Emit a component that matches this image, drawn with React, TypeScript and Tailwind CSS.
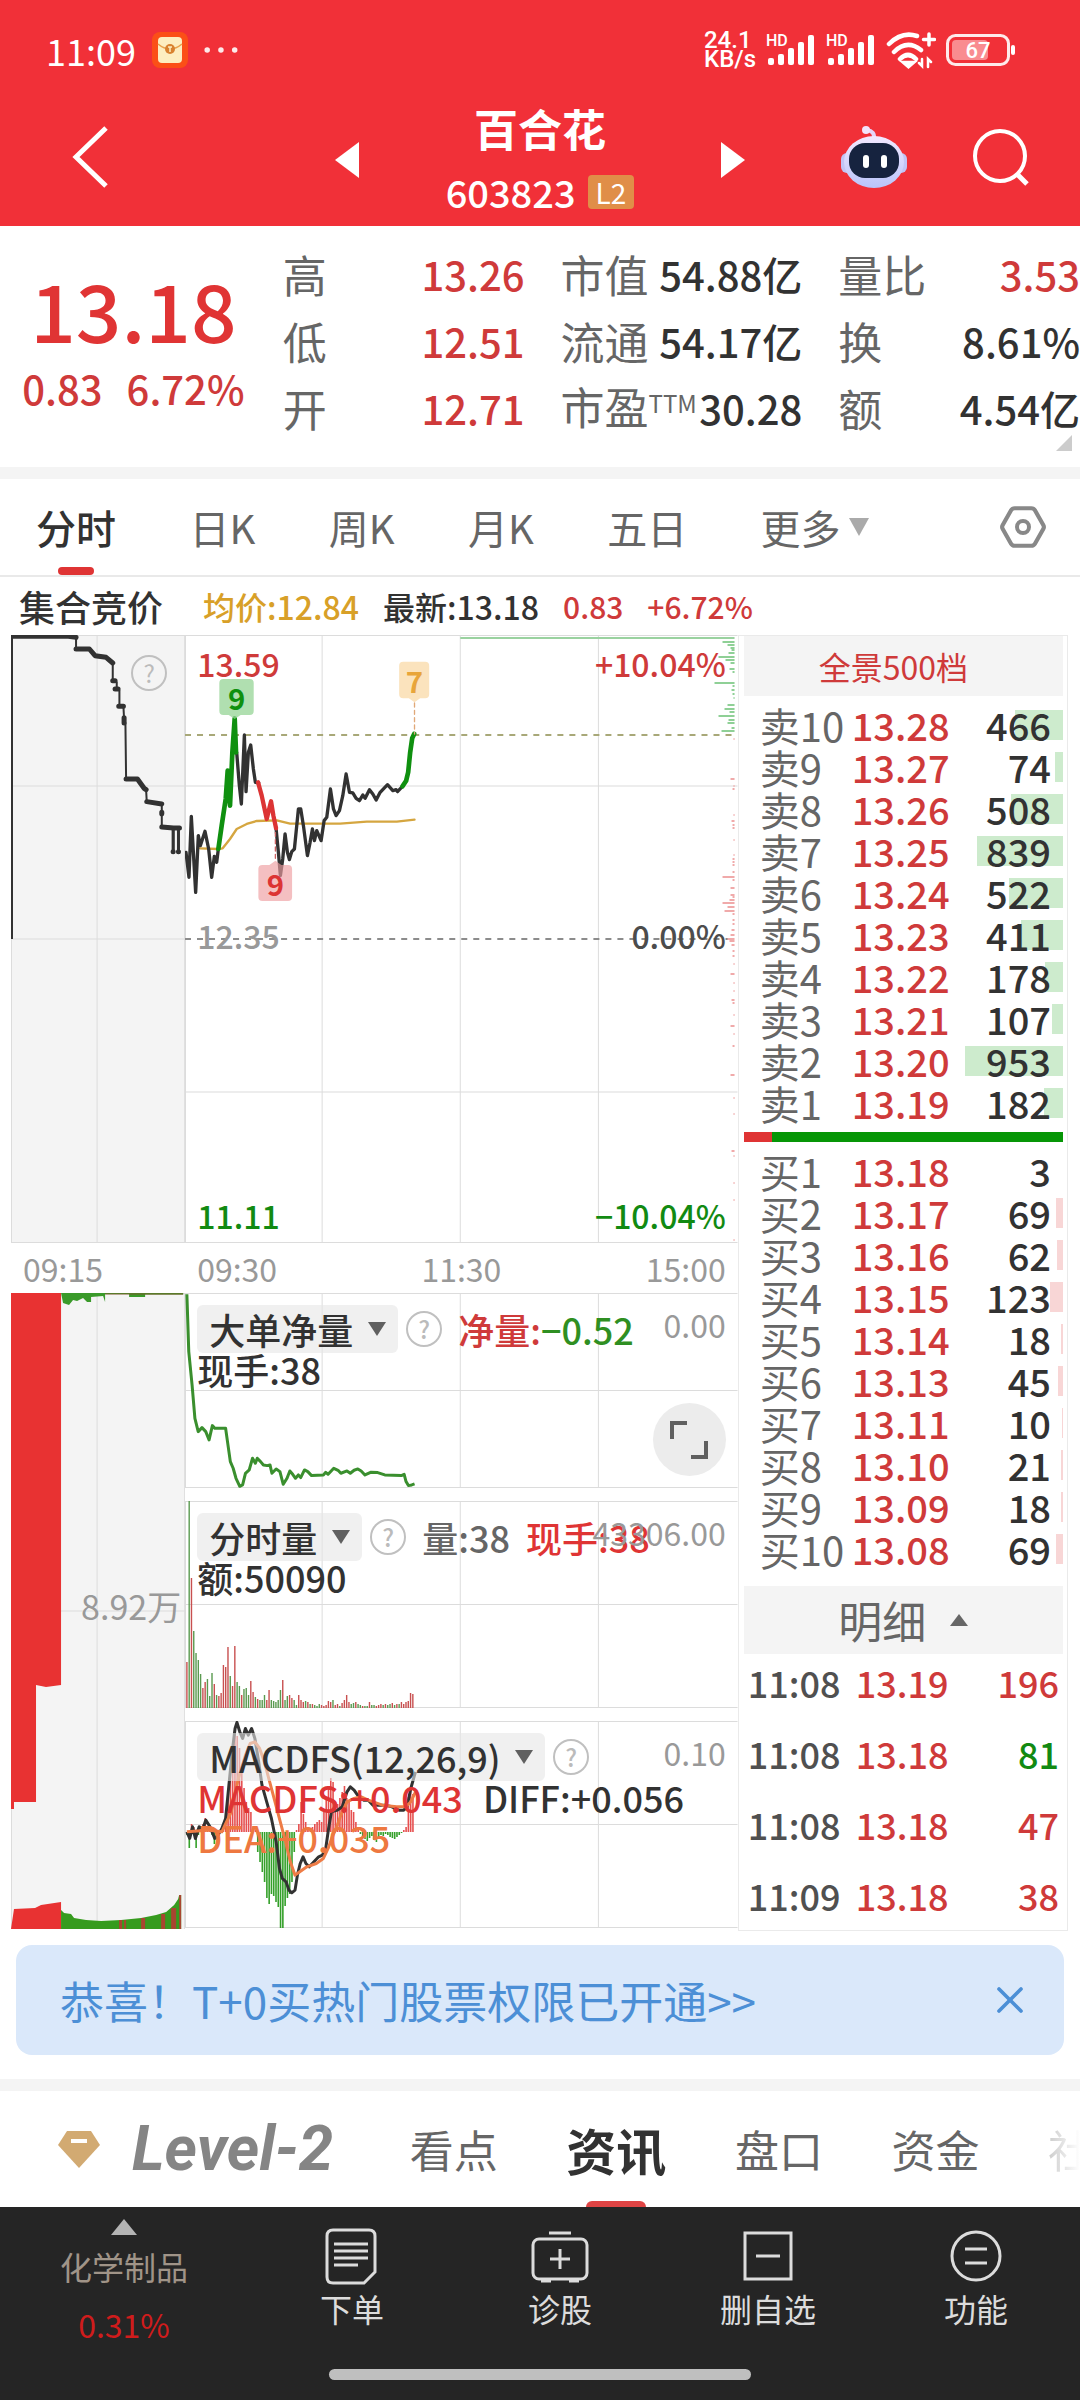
import type { ReactNode } from 'react';
import { Hexagon, X } from 'lucide-react';

const quotes = [
  [
    { label: '高', value: '13.26', up: true },
    { label: '低', value: '12.51', up: true },
    { label: '开', value: '12.71', up: true },
  ],
  [
    { label: '市值', value: '54.88亿' },
    { label: '流通', value: '54.17亿' },
    { label: '市盈', sup: 'TTM', value: '30.28' },
  ],
  [
    { label: '量比', value: '3.53', up: true },
    { label: '换', value: '8.61%' },
    { label: '额', value: '4.54亿' },
  ],
];

const sells: [string, string, number][] = [
  ['卖10', '13.28', 466],
  ['卖9', '13.27', 74],
  ['卖8', '13.26', 508],
  ['卖7', '13.25', 839],
  ['卖6', '13.24', 522],
  ['卖5', '13.23', 411],
  ['卖4', '13.22', 178],
  ['卖3', '13.21', 107],
  ['卖2', '13.20', 953],
  ['卖1', '13.19', 182],
];

const buys: [string, string, number][] = [
  ['买1', '13.18', 3],
  ['买2', '13.17', 69],
  ['买3', '13.16', 62],
  ['买4', '13.15', 123],
  ['买5', '13.14', 18],
  ['买6', '13.13', 45],
  ['买7', '13.11', 10],
  ['买8', '13.10', 21],
  ['买9', '13.09', 18],
  ['买10', '13.08', 69],
];

const trades = [
  { time: '11:08', price: '13.19', vol: 196, up: true },
  { time: '11:08', price: '13.18', vol: 81, up: false },
  { time: '11:08', price: '13.18', vol: 47, up: true },
  { time: '11:09', price: '13.18', vol: 38, up: true },
];

// [y, length] of the price distribution bars
const profileAbove = [
  [7, 12], [10, 7], [13, 4], [15, 3], [18, 6], [22, 16], [25, 9], [28, 4], [34, 5], [37, 2], [48, 20], [51, 2],
  [55, 3], [59, 2], [63, 1], [70, 7], [74, 10], [77, 5], [81, 16], [85, 6], [88, 7], [93, 3], [96, 13],
];
const profileBelow = [
  [104, 1], [144, 4], [151, 1], [154, 2], [180, 1], [186, 3], [190, 2], [193, 2], [205, 1], [220, 1], [224, 2],
  [227, 2], [230, 2], [237, 2], [242, 12], [245, 2], [253, 4], [260, 4], [262, 2], [265, 5], [268, 12], [272, 7],
  [276, 10], [279, 2], [285, 2], [289, 2], [295, 3], [300, 4], [304, 7], [306, 5], [310, 3], [316, 2], [321, 2],
  [329, 1], [339, 4], [348, 1], [356, 1], [365, 3], [368, 2], [380, 1], [391, 4], [399, 1], [411, 2], [440, 4],
  [463, 1], [479, 1], [516, 3], [521, 1], [548, 1], [565, 1], [605, 1],
];

// height + colour per minute
const volumes =
  '46r 207g 130r 77g 55g 48g 34g 20r 26r 29g 12g 35g 24r 13g 12r 15r 43r 41r 61r 32g 22r 62r 26g 22g 13r 19g 20g 13g 27r 16r 11g 9r 8g 8g 13g 8r 18r 8g 7g 6g 8g 18g 28r 8g 12g 13r 10r 8g 3g 13r 8r 6r 7g 6r 4g 4r 3g 2g 4g 3r 2r 3r 7r 6r 8g 3r 4r 2g 5r 8r 13r 6r 4g 5g 6r 4g 3g 2r 2g 2g 6r 3g 3g 2r 3r 4r 3g 4r 3g 4g 5r 3g 4r 4g 6r 4r 6r 7r 15r 14r'.split(' ');

const macd = [
  -3, -16, 8, 5, -16, -3, 3, 8, 14, 4, 3, -3, -12, -6, -4, 3, 8, 22, 34, 52, 74, 99, 96, 84, 62, 44, 30, 24, 20, 6, 2,
  -20, -30, -40, -50, -66, -72, -62, -64, -70, -75, -96, -96, -74, -66, -62, -50, -20, 2, 8, 30, 18, 10, 3, 3, 5, 8,
  10, 12, 10, 20, 35, 45, 54, 50, 30, 28, 34, 40, 46, 34, 30, 22, 20, 10, 4, -2, -5, -7, -9, -6, -4, -8, -10, -6, -3,
  -4, -2, -3, -5, -6, -7, -5, -3, -1, 2, 5, 35, 43, 38,
];

const tabs = ['分时', '日K', '周K', '月K', '五日'];

function Grid({ height, rows }: { height: number; rows: number[] }) {
  return (
    <g stroke="#dcdcdc">
      {[137, 275, 413].map((x) => (
        <line key={x} x1={x} x2={x} y1="0" y2={height} />
      ))}
      {rows.map((y) => (
        <line key={y} x1="0" x2="552" y1={y} y2={y} />
      ))}
      <line x1="0.5" x2="0.5" y1="0" y2={height} />
    </g>
  );
}

function HelpButton() {
  return (
    <button
      type="button"
      aria-label="说明"
      className="flex size-9 shrink-0 items-center justify-center rounded-full border-2 border-[#c0c0c0] text-2xl leading-none text-[#bbb]"
    >
      ?
    </button>
  );
}

function Indicator({ name }: { name: string }) {
  return (
    <label className="relative flex items-center">
      <select
        aria-label="指标"
        className="h-12 appearance-none rounded-md bg-[#e6e6e6]/60 pr-11 pl-3 text-4xl leading-[48px] font-medium text-[#323232]"
      >
        <option>{name}</option>
      </select>
      <svg viewBox="0 0 18 14" className="pointer-events-none absolute right-3 h-3.5 w-[18px]">
        <path d="M0 0h18l-9 14z" fill="#606060" />
      </svg>
    </label>
  );
}

function SubChart({ height, label, mid, children, top, second }: {
  height: string;
  label: string;
  mid: string;
  children: ReactNode;
  top: ReactNode;
  second: ReactNode;
}) {
  return (
    <section aria-label={label} className={`relative ${height}`}>
      {children}
      <div className="absolute inset-0 pt-3 pl-3 font-medium">
        <div className="flex h-12 items-center gap-2 text-4xl whitespace-nowrap">{top}</div>
        <div className="-mt-1 flex flex-wrap gap-x-5 text-4xl leading-10">{second}</div>
      </div>
      <span className="absolute top-2 right-3 text-[32px] leading-[46px] text-[#999]">{mid}</span>
    </section>
  );
}

function StatusBar() {
  return (
    <div className="flex h-24 items-center pt-1 pr-16 pl-[46px] text-white">
      <span className="text-[36px] leading-10">11:09</span>
      <svg viewBox="0 0 36 36" className="ml-4 size-9">
        <rect width="36" height="36" rx="8" fill="#fb4f17" />
        <rect x="6" y="5" width="24" height="26" rx="4" fill="#fdeec0" />
        <path d="M6 12q12 10 24 0" fill="none" stroke="#e8a04a" strokeWidth="1.5" />
        <circle cx="18" cy="17" r="5" fill="#d9822f" />
        <path d="M16 15h4M18 15v5" stroke="#fdeec0" strokeWidth="1.5" />
      </svg>
      <svg viewBox="0 0 34 6" className="ml-4 h-2 w-9" fill="#fff" opacity=".9">
        <circle cx="3" cy="3" r="2.6" />
        <circle cx="16" cy="3" r="2.6" />
        <circle cx="29" cy="3" r="2.6" />
      </svg>
      <div className="ml-auto flex items-center gap-[10px]">
        <span className="font-[Roboto] text-[24px] leading-[19px] font-medium">
          24.1
          <br />
          KB/s
        </span>
        {[0, 1].map((i) => (
          <svg key={i} viewBox="0 0 50 34" className="h-[34px] w-[50px]" fill="#fff">
            <text x="0" y="13" fontSize="16" fontWeight="500" fontFamily="Roboto, sans-serif">
              HD
            </text>
            <rect x="2" y="25" width="6" height="7" rx="2" />
            <rect x="12" y="21" width="6" height="11" rx="2" />
            <rect x="22" y="15" width="6" height="17" rx="2" />
            <rect x="32" y="9" width="6" height="23" rx="2" />
            <rect x="42" y="2" width="6" height="30" rx="2" />
          </svg>
        ))}
        <svg viewBox="0 0 50 38" className="h-[38px] w-[50px]" fill="none" stroke="#fff" strokeWidth="4.5" strokeLinecap="round">
          <path d="M3 13Q16 0 31 5M8 21q13-13 27 -2M14 28q8-8 16 0" />
          <path d="M19 32l3.500 3 3.500-3z" fill="#fff" />
          <path d="M43 3v11M37.500 8.500h11" strokeWidth="3.500" />
          <path d="M36 28v7l-3-3M42 36v-8l3 3" strokeWidth="2.500" />
        </svg>
        <svg viewBox="0 0 70 32" className="h-8 w-[70px]">
          <rect x="1.500" y="1.500" width="61" height="29" rx="8" fill="none" stroke="#fff" strokeWidth="3" opacity=".9" />
          <rect x="6" y="6" width="36" height="20" rx="4" fill="#f98c90" />
          <rect x="65" y="11" width="4" height="10" rx="2" fill="#fff" />
          <text x="32" y="24" textAnchor="middle" fill="#fff" fontSize="22" fontWeight="500" fontFamily="Roboto, sans-serif">
            67
          </text>
        </svg>
      </div>
    </div>
  );
}

function Robot() {
  return (
    <svg viewBox="0 0 68 64" className="h-16 w-[68px]">
      <defs>
        <linearGradient id="shell" x1="0" y1="0" x2="0" y2="1">
          <stop offset="0%" stopColor="#f3e8ff" />
          <stop offset="100%" stopColor="#b9c4fa" />
        </linearGradient>
      </defs>
      <path d="M34 14q1-8-7-9" fill="none" stroke="#e6d3f7" strokeWidth="4" />
      <circle cx="26" cy="5" r="4" fill="#f3e3fb" />
      <rect x="1" y="28" width="12" height="20" rx="6" fill="#c2c4f6" />
      <rect x="55" y="28" width="12" height="20" rx="6" fill="#c2c4f6" />
      <ellipse cx="34" cy="37" rx="30" ry="26" fill="url(#shell)" />
      <rect x="9" y="18" width="50" height="35" rx="16" fill="#16233f" />
      <rect x="23" y="30" width="6" height="13" rx="3" fill="#fff" />
      <rect x="41" y="30" width="6" height="13" rx="3" fill="#fff" />
    </svg>
  );
}

function Header() {
  return (
    <header className="bg-[#f13038]">
      <StatusBar />
      <div className="relative flex h-[130px] items-center justify-between pr-[50px] pb-2 pl-[72px]">
        <button type="button" aria-label="返回">
          <svg viewBox="0 0 38 62" className="h-[62px] w-[38px]" fill="none" stroke="#fff" strokeWidth="5">
            <path d="M34 2L4 31l30 29" />
          </svg>
        </button>
        <div className="absolute inset-x-0 top-0 mx-auto flex w-[410px] items-center justify-between">
          <button type="button" aria-label="上一只">
            <svg viewBox="0 0 24 36" className="h-9 w-6">
              <path d="M24 0v36L0 18z" fill="#fff" />
            </svg>
          </button>
          <div className="flex flex-col items-center text-white">
            <h1 className="text-[44px] leading-[64px] font-bold">百合花</h1>
            <p className="flex items-center gap-3">
              <span className="text-[38px] leading-[64px] font-medium">603823</span>
              <span className="rounded-sm bg-[#e08e48] px-2 text-[28px] leading-[34px]">L2</span>
            </p>
          </div>
          <button type="button" aria-label="下一只">
            <svg viewBox="0 0 24 36" className="h-9 w-6">
              <path d="M0 0v36l24-18z" fill="#fff" />
            </svg>
          </button>
        </div>
        <div className="flex items-center gap-16">
          <button type="button" aria-label="助手">
            <Robot />
          </button>
          <button type="button" aria-label="搜索">
            <svg viewBox="0 0 58 58" className="size-[58px]" fill="none" stroke="#fff" strokeWidth="4">
              <circle cx="28" cy="28" r="25" />
              <path d="M45 46l10 10" strokeWidth="5" />
            </svg>
          </button>
        </div>
      </div>
    </header>
  );
}

function Quote() {
  return (
    <section className="relative grid h-[253px] grid-cols-[245fr_240fr_240fr_240fr] gap-x-9 border-b-12 border-[#f4f4f4] pt-3.5">
      <div className="flex flex-col items-center pl-5 text-[#cf3a3a]">
        <strong className="pt-4 text-[80px] leading-[104px] font-medium text-[#e03434]">13.18</strong>
        <p className="flex gap-6 text-[40px] leading-14 font-medium">
          <span>0.83</span>
          <span>6.72%</span>
        </p>
      </div>
      {quotes.map((col, i) => (
        <dl key={i}>
          {col.map((q) => (
            <div key={q.label} className="flex h-[67px] items-center justify-between whitespace-nowrap">
              <dt className="text-[44px] leading-none text-[#666]">
                {q.label}
                {q.sup && <sup className="text-2xl">{q.sup}</sup>}
              </dt>
              <dd className={`text-[40px] leading-none font-medium ${q.up ? 'text-[#cf3a3a]' : 'text-[#323232]'}`}>
                {q.value}
              </dd>
            </div>
          ))}
        </dl>
      ))}
      <svg viewBox="0 0 16 16" className="absolute right-2 bottom-4 size-4">
        <path d="M16 0v16H0z" fill="#ccc" />
      </svg>
    </section>
  );
}

function PeriodTabs() {
  return (
    <nav className="flex h-[98px] items-center justify-between border-b-2 border-[#e9e9e9] pr-8 pl-9 text-[40px] text-[#666]">
      {tabs.map((t, i) => (
        <button
          key={t}
          type="button"
          className={`relative h-full ${i === 0 ? 'font-medium text-[#323232]' : ''}`}
        >
          {t}
          {i === 0 && <span className="absolute bottom-0 left-1/2 h-2 w-9 -translate-x-1/2 rounded-full bg-[#df3434]" />}
        </button>
      ))}
      <button type="button" className="flex items-center gap-2">
        更多
        <svg viewBox="0 0 20 18" className="h-[18px] w-5">
          <path d="M0 0h20L10 18z" fill="#aaa" />
        </svg>
      </button>
      <button type="button" aria-label="设置" className="relative ml-14 text-[#888]">
        <Hexagon size={50} strokeWidth={2} className="rotate-90" />
        <span className="absolute inset-0 m-auto size-4 rounded-full border-4 border-[#888]" />
      </button>
    </nav>
  );
}

function PreMarket() {
  return (
    <div className="flex flex-col">
      <div className="relative h-[608px] bg-[#f4f4f4]">
        <svg viewBox="0 0 174 608" preserveAspectRatio="none" className="h-full w-full" fill="none">
          <g stroke="#dcdcdc">
            <path d="M86 0V608M0 .5H174M0 151H174M0 304H174M0 607.500H174M.5 0V608M173.500 0V608" />
          </g>
          <g stroke="#323232" strokeLinejoin="round" strokeLinecap="round" transform="translate(-11 -16) scale(.3333)">
            <path strokeWidth="8" d="M35 50V960" strokeLinecap="butt" />
            <path
              strokeWidth="6"
              d="M36 50H205L228 55V90H268L285 110 318 115 338 132V185L350 190V210L358 215V262H370L372 300 376 312 378 480H412L432 508 438 512 440 550 485 555V622L520 627V698M520 627H535V698"
            />
            <path
              strokeWidth="15"
              d="M38 52H205L228 55M228 90H268L285 110 318 115 338 132M338 185H345M345 210H354M356 262H370M372 296V312M378 480H412L432 508 438 512M440 548L485 555M485 580V585M485 624L520 627H538M519 698H519M535 698H535"
            />
            <path strokeWidth="9" d="M519 630V698M535 630V698" />
          </g>
        </svg>
        <div className="absolute top-5 right-[18px]">
          <HelpButton />
        </div>
      </div>
      <p className="h-[50px] pl-3 text-[32px] leading-[50px] text-[#999]">09:15</p>
      <div className="relative h-[636px] bg-[#f4f4f4]">
        <svg viewBox="0 0 174 636" preserveAspectRatio="none" className="h-full w-full">
          <path d="M86 0V636M0 .5H174M50 318H174M.5 0V636M173.500 0V636" stroke="#dcdcdc" />
          <path d="M0 0H50V392L35 394 25 392V509H3V516H0z" fill="#e83232" />
          <path d="M50 0H172V1.500H134V4H118V1H94V9L92 3 80 4V9L76 9 72 5 66 8 62 7 58 12 52 10z" fill="#3a9a2a" />
          <path d="M94 1H172" stroke="#7a5a2a" />
          <path d="M0 636L3 616 24 615 30 612 50 609V636z" fill="#e83232" />
          <path d="M50 636V617L53 620 60 621 63 625 75 627 90 628 110 627 130 625 145 622 155 619 163 612 167 606 168 602H170V636z" fill="#369b1e" />
          <path d="M108 636v-9h3v9zM113 636v-9h2v9zM130 636v-11h4v11zM150 636v-15h4v15zM160 636v-21h5v21zM168 636v-34h2v34z" fill="#a84630" />
        </svg>
        <span className="absolute top-[290px] right-1 text-[34px] leading-[46px] text-[#999]">8.92万</span>
      </div>
    </div>
  );
}

function PriceChart() {
  return (
    <div className="relative h-[608px]">
      <svg viewBox="0 0 552 608" preserveAspectRatio="none" className="h-full w-full" fill="none">
        <Grid height={608} rows={[0.5, 151, 457, 607.5]} />
        <path d="M0 100H552" stroke="#a8a878" strokeWidth="2" strokeDasharray="6 6" />
        <path d="M0 304H552" stroke="#8c8c8c" strokeWidth="2" strokeDasharray="6 6" />
        <path d="M275 3H549" stroke="#9ad2a0" strokeWidth="2" />
        {profileAbove.map(([y, w]) => (
          <rect key={y} x={549 - w} y={y - 1} width={w} height="2" fill="#8fd096" />
        ))}
        {profileBelow.map(([y, w]) => (
          <rect key={y} x={549 - w} y={y - 1} width={w} height="2" fill="#f0aaaa" />
        ))}
        <g transform="translate(-185 -16) scale(.3333)" strokeLinejoin="round" strokeLinecap="round">
          <path
            stroke="#d5a640"
            strokeWidth="7"
            d="M600 688L655 690 668 688 690 660 710 630 740 615 770 606 830 604 870 614 1020 614 1100 608 1190 608 1243 602"
          />
          <path
            stroke="#323232"
            strokeWidth="10"
            d="M558 700L567 775 574 592 587 820 595 650 601 680 615 637 626 690 635 775 643 712 650 730 655 690M710 400L718 500 724 555 733 348 738 518 745 400 752 378 760 450 766 490 776 492M828 628L835 700 841 770 848 720 855 645 862 700 868 722 875 698 883 690 890 620 895 570 902 570 910 620 922 710 930 670 937 630 943 665 950 635 963 665 972 605 980 595 991 510 1000 570 1008 590 1018 575 1028 530 1038 465 1048 520 1058 522 1068 538 1078 545 1088 528 1095 538 1108 512 1118 525 1128 543 1140 520 1162 497 1178 515 1188 512 1192 518 1207 502"
          />
          <path
            stroke="#0f900f"
            strokeWidth="14"
            d="M655 690L665 620 677 540 683 455 690 560 697 400 704 298 708 400M1207 502L1218 485 1224 460 1230 400 1236 358 1242 345"
          />
          <path stroke="#dc3434" strokeWidth="13" d="M774 490L785 530 800 600 813 547 820 590 828 628" />
          <path stroke="#e0a878" strokeWidth="4" strokeDasharray="12 10" d="M1243 252V345" />
          <path stroke="#c86060" strokeWidth="4" strokeDasharray="12 10" d="M826 640V728" />
          <path d="M670 180H749Q761 180 761 192V276Q761 288 749 288H722L704 300 686 288H670Q658 288 658 276V192Q658 180 670 180z" fill="#96d496" opacity=".75" />
          <path d="M1209 128H1275Q1287 128 1287 140V226Q1287 238 1275 238H1260L1243 250 1226 238H1209Q1197 238 1197 226V140Q1197 128 1209 128z" fill="#fbe3bd" />
          <path d="M787 738H808L826 725 844 738H864Q876 738 876 750V834Q876 846 864 846H787Q775 846 775 834V750Q775 738 787 738z" fill="#ee9ca0" opacity=".65" />
          <g fontSize="88" fontWeight="700" textAnchor="middle">
            <text x="710" y="272" fill="#0f900f">9</text>
            <text x="1243" y="222" fill="#e8a53a">7</text>
            <text x="826" y="830" fill="#dc3434">9</text>
          </g>
        </g>
      </svg>
      <div className="absolute inset-0 flex flex-col justify-between px-3 py-1 text-[32px] leading-[48px] font-medium">
        <p className="flex justify-between text-[#cf3a3a]">
          <span>13.59</span>
          <span>+10.04%</span>
        </p>
        <p className="flex justify-between pb-2 text-[#999]">
          <span>12.35</span>
          <span className="text-[#4c4c4c]">0.00%</span>
        </p>
        <p className="flex justify-between text-[#128a12]">
          <span>11.11</span>
          <span>−10.04%</span>
        </p>
      </div>
    </div>
  );
}

function Charts() {
  return (
    <div className="flex flex-col">
      <PriceChart />
      <p className="grid h-[50px] grid-cols-3 px-3 text-[32px] leading-[50px] text-[#999]">
        <span>09:30</span>
        <span className="text-center">11:30</span>
        <span className="text-right">15:00</span>
      </p>

      <SubChart
        height="h-[195px]"
        label="大单净量"
        mid="0.00"
        top={
          <>
            <Indicator name="大单净量" />
            <HelpButton />
            <span className="ml-2 text-[#cf3a3a]">
              净量:<span className="text-[#2f8f22]">−0.52</span>
            </span>
          </>
        }
        second={<span className="text-[#323232]">现手:38</span>}
      >
        <svg viewBox="0 0 552 195" preserveAspectRatio="none" className="h-full w-full" fill="none">
          <Grid height={195} rows={[0.5, 97.5, 194.5]} />
          <path
            transform="translate(-185 -74.7) scale(.4719 .3333)"
            vectorEffect="non-scaling-stroke"
            stroke="#3a8f2e"
            strokeWidth="3"
            strokeLinejoin="round"
            d="M396 228L400 400 407 500 413 600 420 640 428 628 436 640 443 665 450 622 455 630 478 630 482 670 488 730 494 750 500 780 508 804 514 800 520 765 528 755 535 720 541 735 545 720 552 730 558 740 566 742 572 740 576 765 585 752 593 760 600 798 608 780 614 758 620 768 626 780 632 770 637 778 645 755 652 760 660 772 685 770 690 762 695 768 707 750 716 756 722 765 735 758 742 765 750 756 758 752 765 758 773 770 785 762 800 763 815 770 850 772 856 768 860 790 865 802 872 800 878 797"
          />
        </svg>
        <button
          type="button"
          aria-label="全屏"
          className="absolute right-3 bottom-3 z-10 flex size-[73px] items-center justify-center rounded-full bg-[#ececec]"
        >
          <svg viewBox="0 0 38 38" className="size-[38px]" fill="none" stroke="#606060" strokeWidth="4">
            <path d="M2 18V2h15M36 20v16H21" />
          </svg>
        </button>
      </SubChart>

      <div className="pt-[13px]">
        <SubChart
          height="h-[207px]"
          label="分时量"
          mid="43306.00"
          top={
            <>
              <Indicator name="分时量" />
              <HelpButton />
              <span className="ml-2 text-[#666]">量:38</span>
              <span className="ml-2 text-[#df3434]">现手:38</span>
            </>
          }
          second={<span className="text-[#323232]">额:50090</span>}
        >
          <svg viewBox="0 0 552 207" preserveAspectRatio="none" className="h-full w-full">
            <Grid height={207} rows={[0.5, 103.5, 206.5]} />
            {volumes.map((v, i) => {
              const h = parseInt(v, 10);
              return (
                <rect
                  key={i}
                  x={1.2 + i * 2.28}
                  y={207 - h}
                  width="1.4"
                  height={h}
                  fill={v.endsWith('r') ? '#c85050' : '#5a9a50'}
                />
              );
            })}
          </svg>
        </SubChart>
      </div>

      <div className="pt-[13px]">
        <SubChart
          height="h-[207px]"
          label="MACDFS"
          mid="0.10"
          top={
            <>
              <Indicator name="MACDFS(12,26,9)" />
              <HelpButton />
            </>
          }
          second={
            <>
              <span className="text-[#df3434]">MACDFS:+0.043</span>
              <span className="text-[#323232]">DIFF:+0.056</span>
              <span className="text-[#ee7840]">DEA:+0.035</span>
            </>
          }
        >
          <svg viewBox="0 0 552 207" preserveAspectRatio="none" className="h-full w-full" fill="none">
            <Grid height={207} rows={[0.5, 103.5, 206.5]} />
            {macd.map((v, i) => (
              <rect
                key={i}
                x={1.2 + i * 2.28}
                y={v > 0 ? 111 - v : 111}
                width="1.6"
                height={Math.abs(v)}
                fill={v > 0 ? '#e65050' : '#34a02a'}
              />
            ))}
            <g transform="translate(-185 -222.500) scale(.4719 .3333)" strokeWidth="3" strokeLinejoin="round">
              <path
                vectorEffect="non-scaling-stroke"
                stroke="#323232"
                d="M396 1000L402 1020 408 985 414 1020 422 985 430 990 436 965 445 985 455 1020 462 1010 470 990 478 960 485 860 492 760 498 690 502 672 508 700 514 720 520 690 526 710 533 690 540 720 548 790 555 860 565 910 575 960 585 1030 592 1110 598 1140 606 1150 612 1175 618 1183 625 1175 630 1130 636 1095 642 1075 648 1095 655 1105 665 1090 675 1075 683 1070 690 1050 696 990 702 940 715 935 725 925 735 880 742 865 750 875 760 895 770 905 780 905 790 920 815 920 830 925 845 935 855 935 862 925 870 870 880 820"
              />
              <path
                vectorEffect="non-scaling-stroke"
                stroke="#ee7c46"
                d="M396 1000L440 995 470 1000 490 940 505 840 520 770 530 735 540 730 550 750 560 790 575 870 590 950 605 1030 615 1090 625 1130 635 1120 650 1105 670 1095 685 1080 695 1050 705 1010 712 990 722 950 735 910 750 900 765 895 780 905 810 920 840 925 860 925 870 910 880 880"
              />
            </g>
          </svg>
        </SubChart>
      </div>
    </div>
  );
}

function BookTable({ rows, caption, bar }: { rows: [string, string, number][]; caption: string; bar: string }) {
  return (
    <table aria-label={caption} className="w-full table-fixed text-[38px] leading-[42px] whitespace-nowrap">
      <tbody>
        {rows.map(([label, price, vol]) => (
          <tr key={label} className="h-[42px]">
            <th scope="row" className="w-[108px] p-0 pl-4 text-left text-[40px] font-normal text-[#666]">
              {label}
            </th>
            <td className="w-[100px] p-0 font-medium text-[#cf3a3a]">{price}</td>
            <td className="relative p-0 pr-3 text-right font-medium text-[#323232]">
              <span className={`absolute inset-y-[6px] right-0 ${bar}`} style={{ width: Math.round(vol * 0.103) }} />
              <span className="relative">{vol}</span>
            </td>
          </tr>
        ))}
      </tbody>
    </table>
  );
}

function OrderBook() {
  return (
    <aside className="border border-[#eaeaea] pr-1 pl-[5px]">
      <button type="button" className="block h-[60px] w-full bg-[#f4f4f4] pr-5 text-[32px] text-[#cf3a3a]">
        全景500档
      </button>
      <div className="pt-2">
        <BookTable rows={sells} caption="卖盘" bar="bg-[#cdebcd]" />
      </div>
      <div className="my-2 flex h-[10px]">
        <span className="w-[9%] bg-[#df3434]" />
        <span className="flex-1 bg-[#069606]" />
      </div>
      <BookTable rows={buys} caption="买盘" bar="bg-[#f8d6d6]" />
      <button
        type="button"
        className="mt-4 flex h-[68px] w-full items-center justify-center gap-6 bg-[#f4f4f4] text-[44px] leading-none text-[#666]"
      >
        明细
        <svg viewBox="0 0 18 12" className="h-3 w-[18px]">
          <path d="M9 0l9 12H0z" fill="#666" />
        </svg>
      </button>
      <table aria-label="成交明细" className="-mt-2 w-full table-fixed text-4xl font-medium">
        <tbody>
          {trades.map((t, i) => (
            <tr key={i} className="h-[71px]">
              <td className="w-[112px] p-0 pl-1 text-[#505050]">{t.time}</td>
              <td className="w-[100px] p-0 text-[#cf3a3a]">{t.price}</td>
              <td className={`p-0 pr-1 text-right ${t.up ? 'text-[#cf3a3a]' : 'text-[#128a12]'}`}>{t.vol}</td>
            </tr>
          ))}
        </tbody>
      </table>
    </aside>
  );
}

function InfoTabs() {
  return (
    <nav className="flex h-32 items-center justify-between overflow-hidden border-t-12 border-[#f4f4f4] pl-[58px] text-[44px] whitespace-nowrap text-[#666]">
      <a href="#level2" className="mr-2 flex items-center gap-8">
        <svg viewBox="0 0 42 38" className="h-[38px] w-[42px]">
          <path d="M9 1h24l9 14-21 23L0 15z" fill="#d2aa72" />
          <rect x="13" y="9" width="16" height="4" fill="#fff" />
        </svg>
        <span className="font-[Roboto] text-[62px] leading-none font-bold text-[#858585] italic">Level-2</span>
      </a>
      <a href="#view">看点</a>
      <a href="#news" className="relative flex h-full items-center text-[50px] font-bold text-[#323232]">
        资讯
        <span className="absolute bottom-0 left-1/2 h-[6px] w-[60px] -translate-x-1/2 rounded-t-lg bg-[#df4444]" />
      </a>
      <a href="#board">盘口</a>
      <a href="#funds">资金</a>
      <a href="#community" className="w-8 overflow-hidden bg-gradient-to-r from-[#ccc] to-white bg-clip-text text-transparent">
        社区
      </a>
    </nav>
  );
}

const actions = [
  {
    label: '下单',
    icon: (
      <>
        <path d="M10 3h36q6 0 6 6v36l-11 11H10q-6 0-6-6V9q0-6 6-6z" />
        <path d="M11 17h34M11 24h34M11 31h34M11 38h24" />
      </>
    ),
  },
  {
    label: '诊股',
    icon: (
      <>
        <rect x="2" y="12" width="54" height="40" rx="6" />
        <path d="M18 6h22M29 22v20M19 32h20M10 54h10M38 54h10" />
      </>
    ),
  },
  {
    label: '删自选',
    icon: (
      <>
        <rect x="6" y="6" width="46" height="46" />
        <path d="M17 29h24" />
      </>
    ),
  },
  {
    label: '功能',
    icon: (
      <>
        <circle cx="29" cy="29" r="24" />
        <path d="M18 22h22M18 36h22" />
      </>
    ),
  },
];

function BottomBar() {
  return (
    <footer className="bg-[#252525] pb-5">
      <nav className="grid h-[162px] grid-cols-[248fr_208fr_208fr_208fr_208fr] text-[32px] leading-[46px] text-[#dcdcdc]">
        <button type="button" className="flex flex-col items-center pt-3 text-[#a09488]">
          <svg viewBox="0 0 26 16" className="h-4 w-[26px]">
            <path d="M13 0l13 16H0z" fill="#b4b4b4" />
          </svg>
          <span className="pt-2">化学制品</span>
          <span className="pt-3 text-[#d01c1c]">0.31%</span>
        </button>
        {actions.map((a) => (
          <button key={a.label} type="button" className="flex flex-col items-center pt-5">
            <svg viewBox="0 0 58 58" className="size-[58px]" fill="none" stroke="#dcdcdc" strokeWidth="3">
              {a.icon}
            </svg>
            <span>{a.label}</span>
          </button>
        ))}
      </nav>
      <div className="mx-auto h-[11px] w-[39%] rounded-full bg-[#bfbfbf]" />
    </footer>
  );
}

export default function App() {
  return (
    <div className="min-h-screen bg-white font-['Noto_Sans_CJK_SC',sans-serif]">
      <Header />
      <Quote />
      <PeriodTabs />
      <p className="flex h-[58px] items-center pl-[19px] text-[32px] leading-none font-medium whitespace-nowrap text-[#323232]">
        <span className="text-4xl leading-none">集合竞价</span>
        <span className="ml-10 text-[#d8a028]">均价:12.84</span>
        <span className="ml-6">最新:13.18</span>
        <span className="ml-6 text-[30px] text-[#cf3a3a]">0.83</span>
        <span className="ml-6 text-[30px] text-[#cf3a3a]">+6.72%</span>
      </p>
      <main className="grid grid-cols-[174fr_552fr_330fr] pr-3 pl-[11px]">
        <PreMarket />
        <Charts />
        <OrderBook />
      </main>
      <div className="mx-4 mt-3.5 mb-6 flex h-[110px] items-center justify-between rounded-2xl bg-[#dae8fa] pr-8 pl-11 text-[#4c8fd6]">
        <a href="#t0" className="text-[44px] leading-none">
          恭喜！T+0买热门股票权限已开通&gt;&gt;
        </a>
        <button type="button" aria-label="关闭">
          <X size={44} strokeWidth={2} />
        </button>
      </div>
      <InfoTabs />
      <BottomBar />
    </div>
  );
}
